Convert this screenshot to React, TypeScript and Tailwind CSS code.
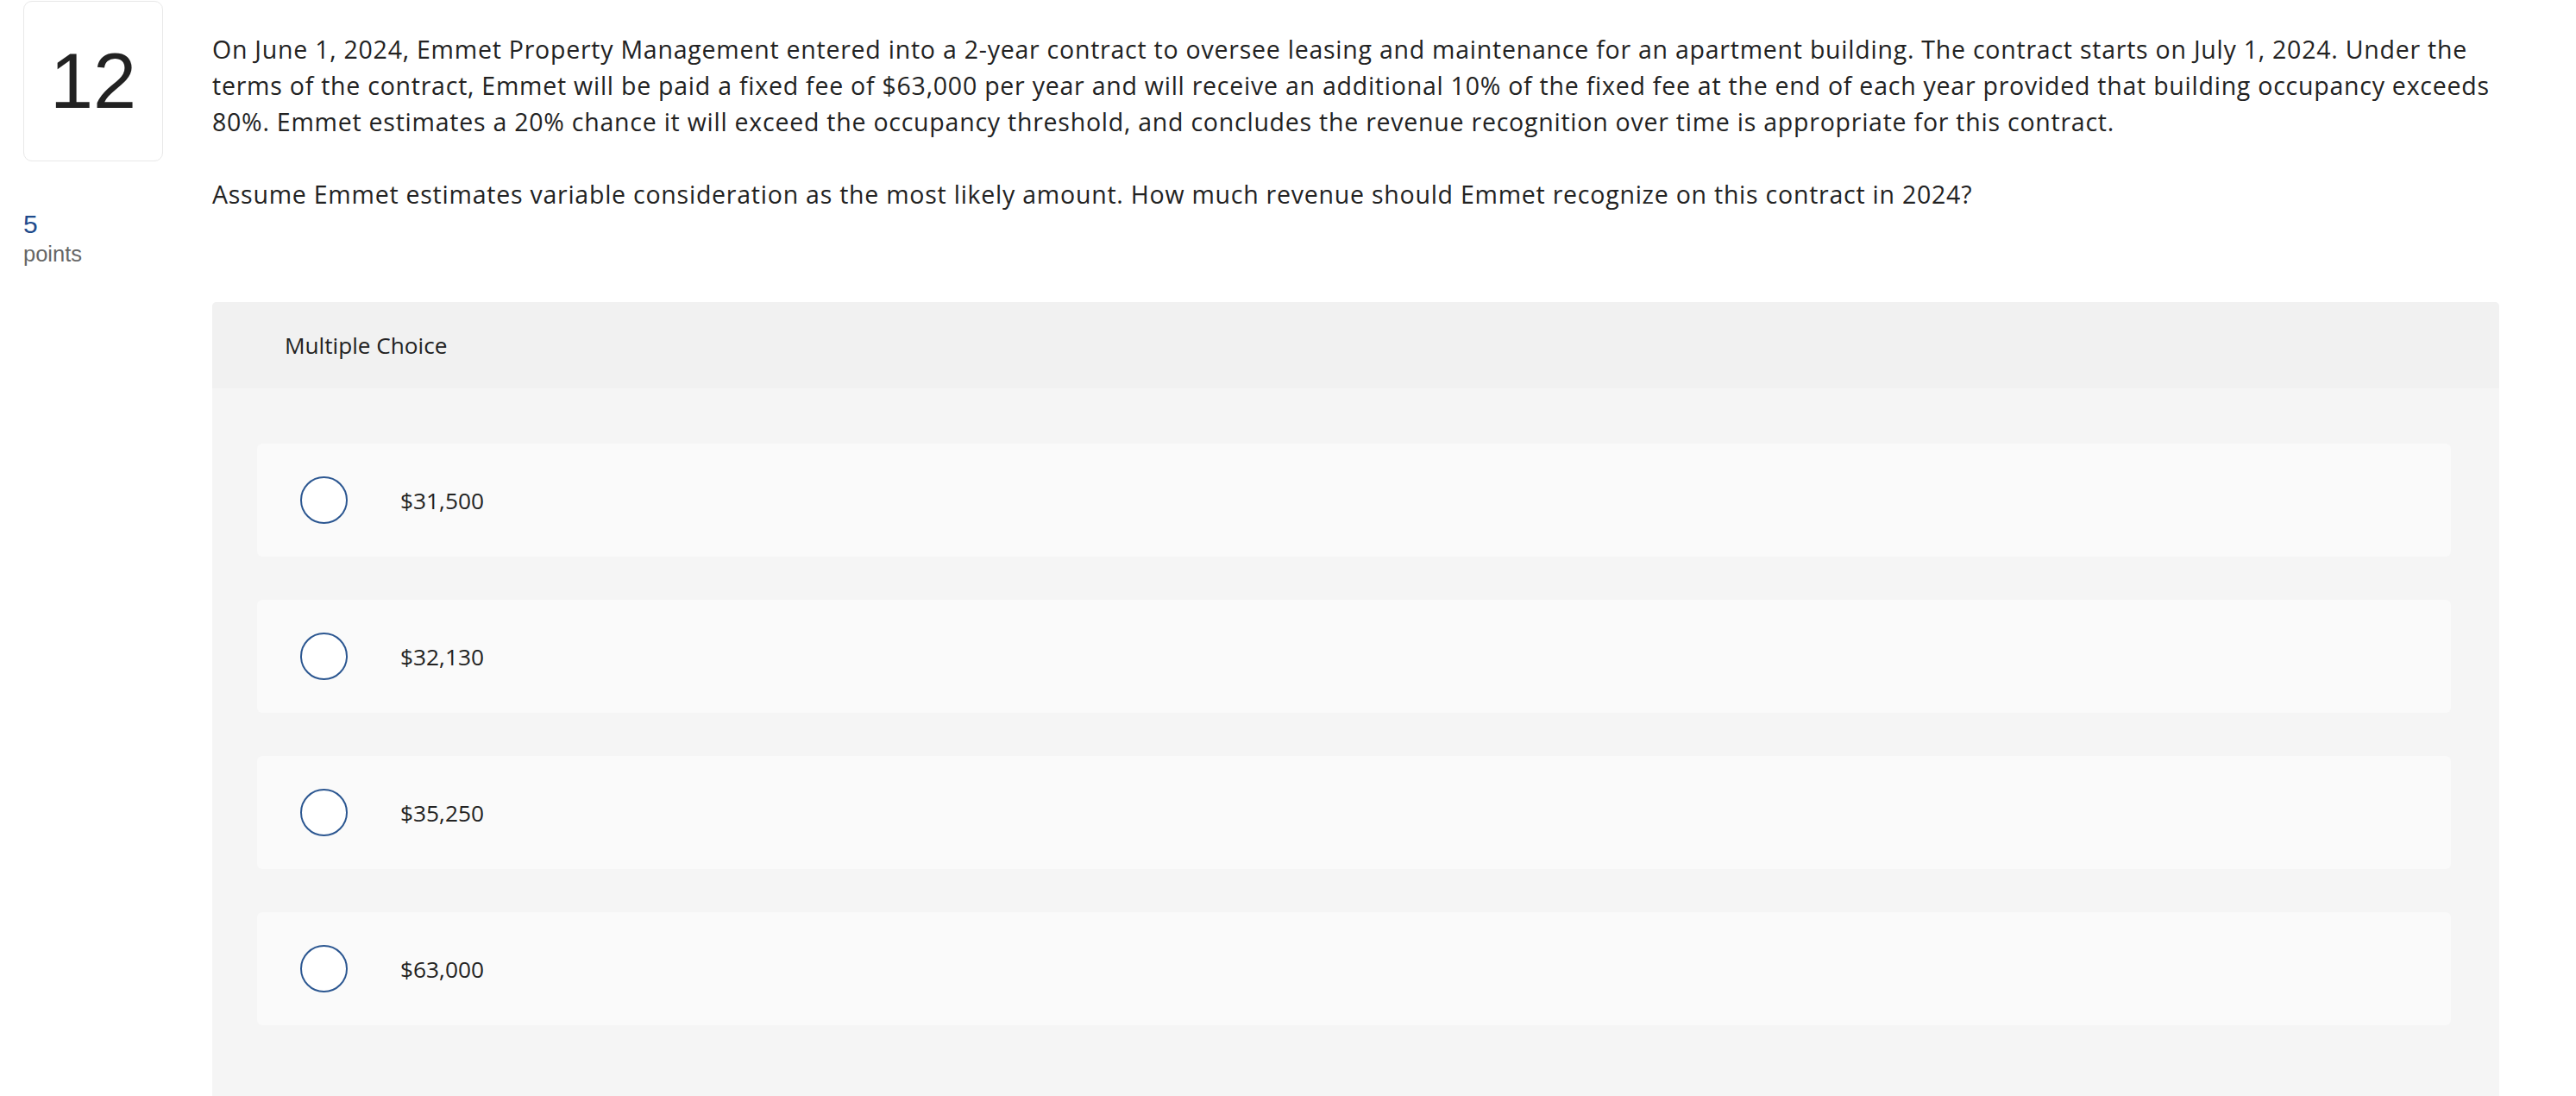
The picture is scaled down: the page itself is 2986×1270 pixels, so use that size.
import React from "react";

const options = ["$31,500", "$32,130", "$35,250", "$63,000"];

const lines1 = [
  "On June 1, 2024, Emmet Property Management entered into a 2-year contract to oversee leasing and maintenance for an apartment building. The contract starts on July 1, 2024. Under the",
  "terms of the contract, Emmet will be paid a fixed fee of $63,000 per year and will receive an additional 10% of the fixed fee at the end of each year provided that building occupancy exceeds",
  "80%. Emmet estimates a 20% chance it will exceed the occupancy threshold, and concludes the revenue recognition over time is appropriate for this contract.",
];

const open = { fontFamily: '"Open Sans", "Liberation Sans", sans-serif' };

export default function App() {
  return (
    <div
      className="flex min-h-[1270px] w-full bg-white text-[#222222]"
      style={{ fontFamily: '"Liberation Sans", Arial, sans-serif' }}
    >
      {/* Left column */}
      <div className="flex w-[246px] shrink-0 flex-col pl-[27px]">
        <div className="mt-[1px] flex h-[186px] w-[162px] items-center justify-center rounded-[10px] border border-[#e8e8e8] bg-white">
          <span className="text-[90px] leading-none text-[#222222]">12</span>
        </div>
        <div className="mt-[55px] text-[30px] leading-[36px] text-[#1f4b8c]">5</div>
        <div className="text-[25.5px] leading-[33px] text-[#666666]">points</div>
      </div>

      {/* Main column */}
      <div className="mr-[89px] flex min-w-0 flex-1 flex-col pt-[36px]" style={open}>
        <div className="text-[28.5px] leading-[42px] tracking-[0.76px] text-[#222222]">
          {lines1.map((l) => (
            <div key={l} className="whitespace-nowrap">
              {l}
            </div>
          ))}
          <div className="h-[42px]" />
          <div className="whitespace-nowrap">
            Assume Emmet estimates variable consideration as the most likely amount. How much revenue should Emmet recognize on this contract in 2024?
          </div>
        </div>

        <div className="mt-[104px] overflow-hidden rounded-t-[5px] bg-[#f5f5f5]">
          <div className="flex h-[100px] items-center bg-[#f1f1f1] pl-[84px]">
            <span className="text-[26.2px] leading-[33px] text-[#222222]">Multiple Choice</span>
          </div>
          <div className="flex flex-col gap-[50px] pb-[110px] pl-[52px] pr-[56px] pt-[64px]">
            {options.map((o) => (
              <div
                key={o}
                className="flex h-[131px] items-center rounded-[6px] bg-[#fafafa] pl-[50px]"
              >
                <span className="h-[55px] w-[55px] shrink-0 rounded-full border-2 border-[#2c5791] bg-white" />
                <span className="ml-[61px] text-[26.3px] leading-[32px] text-[#222222]">{o}</span>
              </div>
            ))}
          </div>
        </div>
      </div>
    </div>
  );
}
